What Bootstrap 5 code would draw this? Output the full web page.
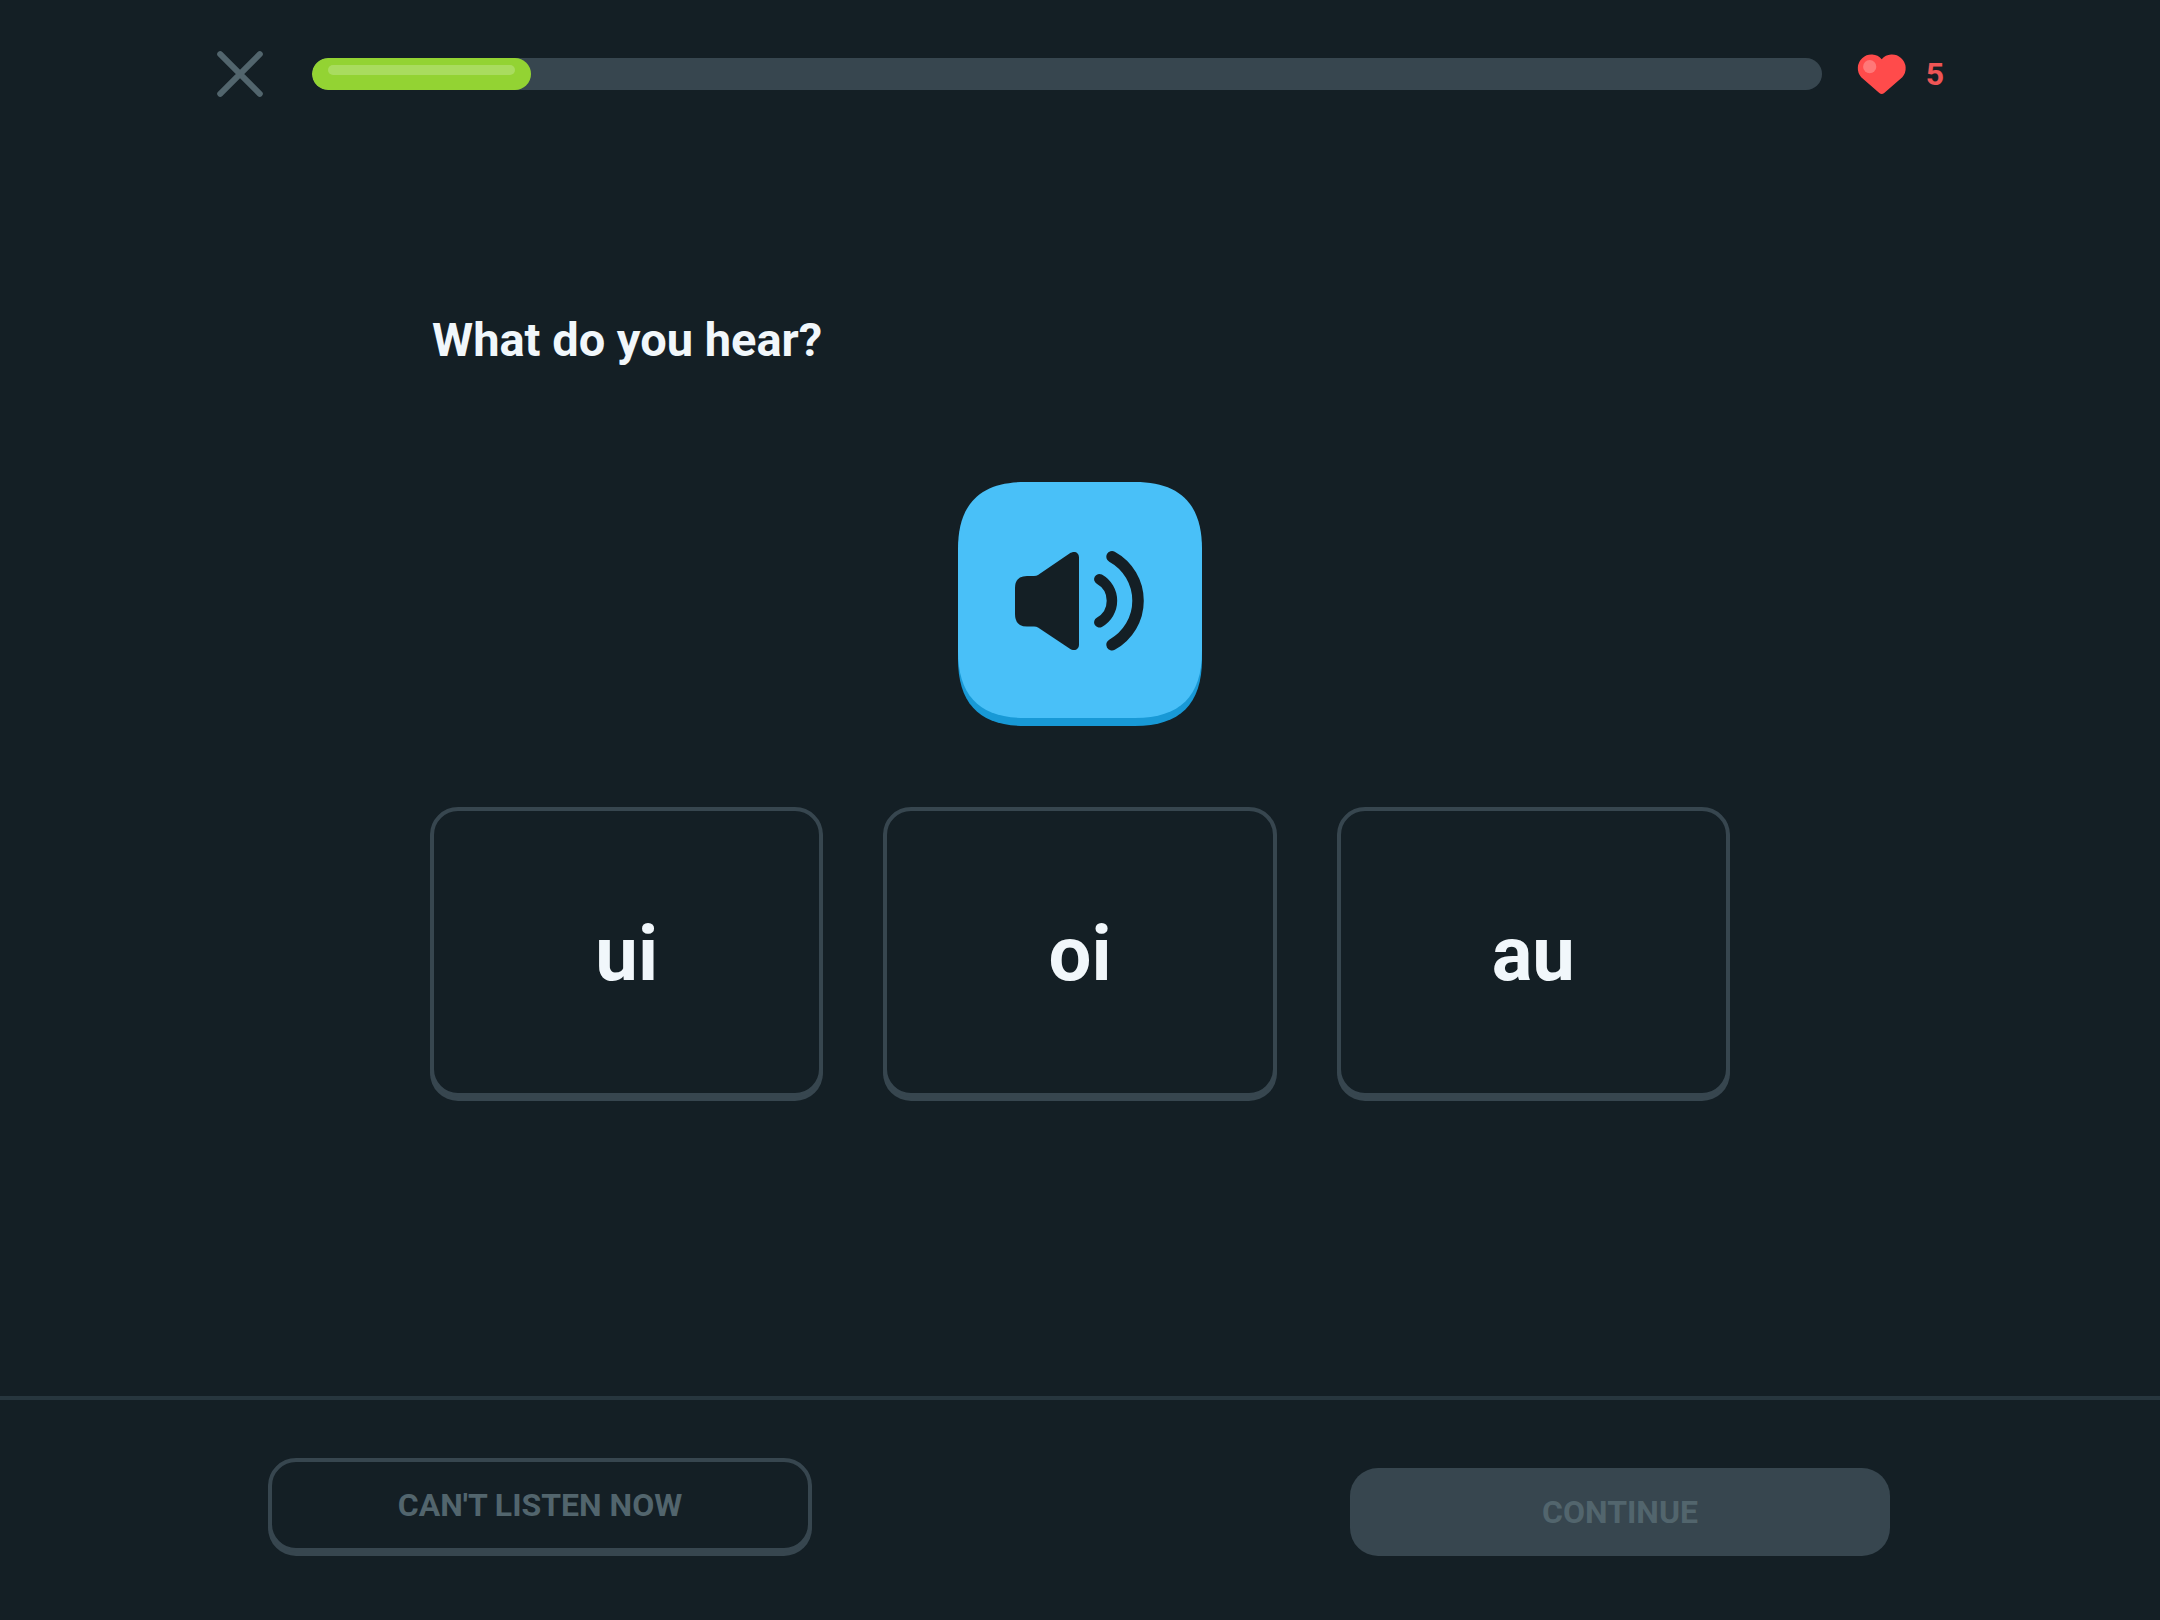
<!DOCTYPE html>
<html lang="en">
<head>
<meta charset="utf-8">
<meta name="viewport" content="width=device-width, initial-scale=1">
<title>Listening exercise</title>
<link href="https://cdn.jsdelivr.net/npm/bootstrap@5.3.0/dist/css/bootstrap.min.css" rel="stylesheet">
<style>
  :root { --bg: #141f25; --line: #37464f; --muted: #52656d; --snow: #f1f7fb; }
  body { background: var(--bg); color: var(--snow); font-family: Roboto, "Noto Sans", sans-serif; font-weight: 700; }
  .lesson-top { padding: 50px 10% 0; }
  .plain-btn { background: none; border: 0; padding: 0; line-height: 0; }
  .lesson-progress { height: 32px; border-radius: 16px; background: var(--line); margin: 0 34px 0 48px; }
  .lesson-progress .progress-bar { background: #93d333; border-radius: 16px; padding: 7px 16px 15px; }
  .bar-shine { height: 10px; border-radius: 5px; background: #a9dc5f; }
  .hearts { gap: 20px; font-size: 32px; line-height: 48px; color: #ee5555; }
  .exercise { width: 100%; max-width: 1348px; padding: 210px 24px 60px; }
  .prompt { font-size: 47px; line-height: 64px; font-weight: 700; margin: 0 0 110px; padding-left: 2px; }
  .choices { gap: 60px; margin-top: 81px; }
  .choice, .skip {
    background: var(--bg); border: 4px solid var(--line); box-shadow: 0 4px 0 var(--line); font-weight: 700;
  }
  .choice { flex: 1 1 0; height: 290px; padding: 4px 0 0; border-radius: 28px; font-size: 76px; line-height: 88px; color: var(--snow); }
  .lesson-foot { border-top: 4px solid #27363e; padding: 58px 0 64px; }
  .foot-btn { width: 50%; font-size: 32px; line-height: 40px; font-weight: 700; border-radius: 28px; color: var(--muted); }
  .skip { width: 544px; max-width: 90%; height: 94px; margin-bottom: 4px; }
  .go, .go:disabled { height: 88px; background: var(--line); border: 0; color: var(--muted); opacity: 1; }
</style>
<script src="https://cdn.jsdelivr.net/npm/bootstrap@5.3.0/dist/js/bootstrap.bundle.min.js" defer></script>
</head>
<body class="d-flex flex-column min-vh-100">

<header class="lesson-top d-flex align-items-center">
  <button type="button" class="plain-btn" aria-label="Close">
    <svg width="48" height="48" viewBox="0 0 48 48" fill="none" stroke="#52656d" stroke-width="6" stroke-linecap="round"><path d="M4.200 4.200 43.800 43.800M43.800 4.200 4.200 43.800"/></svg>
  </button>
  <div class="progress lesson-progress flex-grow-1" role="progressbar" aria-label="Lesson progress" aria-valuenow="14.5" aria-valuemin="0" aria-valuemax="100">
    <div class="progress-bar" style="width: 14.5%"><div class="bar-shine"></div></div>
  </div>
  <div class="hearts d-flex align-items-center">
    <svg width="50" height="42" viewBox="0 0 50 42" overflow="visible" aria-hidden="true">
      <g transform="translate(1 1)">
        <path fill="#ff4b4b" d="M24.700 5.200A13.500 13.500 0 0 0 4.200 23.200L22.300 38.900Q24.700 41 27.200 38.900L45.300 23.200A13.500 13.500 0 0 0 24.700 5.200Z"/>
        <circle cx="12.700" cy="12.700" r="6.600" fill="#ff7878"/>
      </g>
    </svg>
    <span>5</span>
  </div>
</header>

<main class="exercise mx-auto flex-grow-1 d-flex flex-column">
  <h1 class="prompt">What do you hear?</h1>
  <button type="button" class="plain-btn align-self-center" aria-label="Play sound">
    <svg width="244" height="244" viewBox="0 0 244 244">
      <path fill="#1899d6" d="M0 75C0 30 22 8 67 8H177C222 8 244 30 244 75V177C244 222 222 244 177 244H67C22 244 0 222 0 177Z"/>
      <path fill="#49c0f8" d="M0 67C0 22 22 0 67 0H177C222 0 244 22 244 67V169C244 214 222 236 177 236H67C22 236 0 214 0 169Z"/>
      <path fill="#141f25" d="M57 106Q57 94 69 94H76Q78.500 94 80 93L111.500 71.500C116 68.500 121 70 121 75.500V162.500C121 168 116 169.500 111.500 166.500L80 145.500Q78.500 144.500 76 144.500H69Q57 144.500 57 132Z"/>
      <g fill="none" stroke="#141f25" stroke-linecap="round">
        <path stroke-width="10.500" d="M141.300 97.200A24.700 24.700 0 0 1 141.300 140.300"/>
        <path stroke-width="11.500" d="M154 74.700A50.200 50.200 0 0 1 154 162.700"/>
      </g>
    </svg>
  </button>
  <div class="choices d-flex">
    <button type="button" class="choice">ui</button>
    <button type="button" class="choice">oi</button>
    <button type="button" class="choice">au</button>
  </div>
</main>

<footer class="lesson-foot">
  <div class="row g-0 align-items-end">
    <div class="col-6 d-flex justify-content-center"><button type="button" class="foot-btn skip">CAN'T LISTEN NOW</button></div>
    <div class="col-6 d-flex justify-content-center"><button type="button" class="foot-btn go" disabled>CONTINUE</button></div>
  </div>
</footer>

</body>
</html>
